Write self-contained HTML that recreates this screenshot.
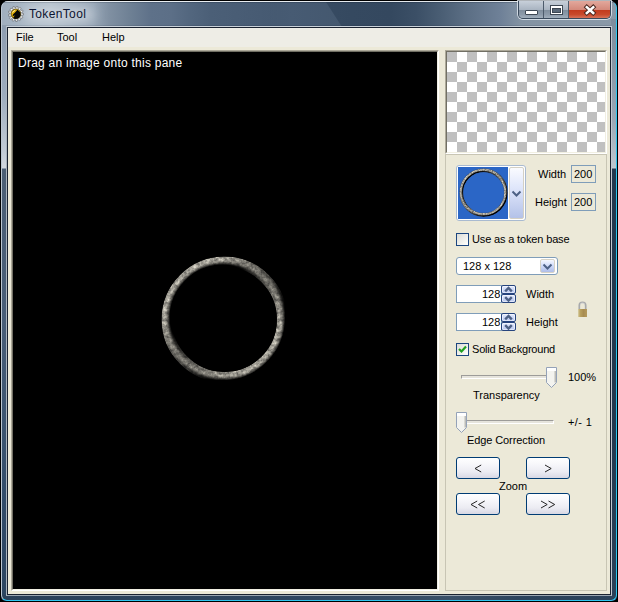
<!DOCTYPE html>
<html><head><meta charset="utf-8">
<style>
*{margin:0;padding:0;box-sizing:border-box}
html,body{width:618px;height:602px;overflow:hidden;background:#000}
body{position:relative;font-family:"Liberation Sans",sans-serif}
div,span{position:absolute}
.t{font-size:11px;line-height:15px;white-space:nowrap;color:#000}
#frame{left:0;top:0;width:618px;height:602px;border-radius:8px 8px 6px 6px;background:#000;overflow:hidden}
#glass{left:1px;top:1px;width:616px;height:600px;border-radius:7px 7px 5px 5px;overflow:hidden;background:#2d435b}
#titlebar{left:0;top:0;width:616px;height:26px;
 background:linear-gradient(90deg,#a0aebe 0px,#a8b6c4 20px,#b4c0cc 50px,#98a7b7 92px,#8090a2 108px,#6f8195 128px,#5e7189 150px,#5c6f87 170px,#52667e 190px,#4b5f77 210px,#475b73 260px,#3e5269 300px,#374b62 320px,#354960 350px,#34485f 390px,#3b4f66 415px,#4a5e74 440px,#5b6e84 465px,#6f8198 500px,#8393a3 520px,#8a99a8 616px)}
#tglow{left:24px;top:8px;width:68px;height:11px;border-radius:6px;background:rgba(214,221,228,0.9);filter:blur(6px)}
#hl-top{left:0;top:0;width:616px;height:1px;background:linear-gradient(90deg,#cfd6de,#eef2f5 30px,#dfe5ea 590px,#9fb0c0)}
#lframe{left:0;top:25px;width:6px;height:575px;background:linear-gradient(180deg,#8e9db0 0px,#9eadbd 70px,#c2cbd5 125px,#d2d8df 142px,#4c5f75 143px,#495e77 295px,#3a536f 420px,#324c69 475px,#2c4560 575px)}
#rframe{left:610px;top:18px;width:6px;height:582px;background:linear-gradient(180deg,#7d8d9d 0px,#8696a6 40px,#9aa7b5 100px,#bcc6cf 148px,#c6ced6 149px,#22384f 150px,#22384f 400px,#2b4159 582px)}
#bframe{left:0;top:594px;width:616px;height:6px;background:linear-gradient(90deg,#2a4059,#2f4660 300px,#3a5068 450px,#2c435c 520px,#2b4159)}
#hl-box{left:0;top:0;width:616px;height:600px;border:1px solid;border-color:transparent #2ec6f0 #2ec6f0 #bcc6d0;border-radius:7px 7px 6px 6px}
/* client */
#cedge{left:6px;top:26px;width:606px;height:570px;border:1px solid #d2d8de;border-color:#c9d1d9 #c0c8d0 #9aa5b0 #aab4be}
#cedge2{left:7px;top:27px;width:604px;height:568px;border:1px solid #1a2230}
#client{left:8px;top:28px;width:602px;height:566px;background:#ece9d8;overflow:hidden}
#menubar{left:0;top:0;width:602px;height:19px;background:#eeede6}
/* buttons */
#capbtns{left:518px;top:1px;width:93px;height:18px;border-radius:0 0 5px 5px;border:1px solid #3a4a5c;border-top:none;overflow:hidden;box-shadow:0 0 0 1px rgba(235,242,248,0.75)}
#bmin{left:0;top:0;width:25px;height:17px;background:linear-gradient(180deg,#c8d0da 0%,#aab5c2 50%,#7f8d9c 52%,#8d9baa 80%,#a2afbc 100%);border-right:1px solid #4d5b6b}
#bmax{left:25px;top:0;width:25px;height:17px;background:linear-gradient(180deg,#c8d0da 0%,#aab5c2 50%,#7f8d9c 52%,#8d9baa 80%,#a2afbc 100%);border-right:1px solid #4d5b6b}
#bclose{left:50px;top:0;width:42px;height:17px;background:linear-gradient(180deg,#e2a89c 0%,#d48a7c 50%,#c23a1e 54%,#c84a2c 80%,#d6725a 100%);border-right:1px solid #5a2414}

.sunk{border-style:solid;border-width:1px;border-color:#aca899 #fff #fff #aca899}
.sunk2{left:0;top:0;border-style:solid;border-width:1px;border-color:#716f64 #f1efe2 #f1efe2 #716f64}
.fld{border:1px solid #7f9db9}
.cb{width:13px;height:13px;border:1px solid #1c4680;background:linear-gradient(135deg,#dcdcd7,#f5f5f2 70%,#fff)}
.dd{border:1px solid #d6d2c6;border-radius:2px;background:linear-gradient(180deg,#f6f8fe,#d2ddfa 45%,#aebde8)}
.sp{width:15px;border:1px solid #26447e;border-radius:2px;background:linear-gradient(180deg,#e4eafc,#cdd8f7 50%,#b6c5ef);box-shadow:inset 0 0 0 1px rgba(255,255,255,0.55)}
.trk{height:4px;border-top:1px solid #9d9c99;border-left:1px solid #9d9c99;border-bottom:1px solid #fff;border-right:1px solid #fff;background:#e6e4dc}
.btn{width:44px;height:22px;border:1px solid #003c74;border-radius:3px;background:linear-gradient(180deg,#fff 0%,#f6f6fa 35%,#ebebf2 70%,#d8d8e4 100%);font-size:11px;line-height:20px;text-align:center;color:#000;letter-spacing:1px}
</style></head>
<body>
<div id="frame">
 <div id="glass">
  <div id="titlebar"></div><div style="left:240px;top:1px;width:104px;height:25px;background:linear-gradient(90deg,rgba(71,91,115,0),#475b73 50px,#44586f 100px);clip-path:polygon(0 0,85px 0,101px 100%,0 100%)"></div><div style="left:0;top:1px;width:616px;height:1px;background:rgba(0,10,30,0.18)"></div><div style="left:0;top:24px;width:616px;height:1px;background:rgba(0,10,30,0.1)"></div>
  <div id="tglow"></div>
  <div id="lframe"></div>
  <div id="rframe"></div>
  <div id="bframe"></div>
  <div id="hl-top"></div>
  <div id="hl-box"></div>
 </div>
</div>
<svg style="position:absolute;left:8px;top:6px" width="16" height="16" viewBox="0 0 16 16">
 <path d="M7.90 1.90 L8.46 0.22 L9.92 0.47 L9.89 2.24 L10.69 2.59 L11.96 1.36 L13.14 2.26 L12.29 3.81 L12.84 4.49 L14.54 4.00 L15.16 5.34 L13.69 6.32 L13.86 7.18 L15.59 7.53 L15.52 9.01 L13.76 9.19 L13.51 10.03 L14.88 11.14 L14.13 12.43 L12.49 11.77 L11.88 12.39 L12.58 14.02 L11.31 14.80 L10.16 13.46 L9.34 13.73 L9.20 15.49 L7.71 15.60 L7.32 13.87 L6.46 13.73 L5.52 15.22 L4.16 14.63 L4.61 12.92 L3.92 12.39 L2.39 13.28 L1.46 12.12 L2.66 10.82 L2.29 10.03 L0.52 10.10 L0.24 8.64 L1.90 8.04 L1.94 7.18 L0.34 6.42 L0.77 5.00 L2.52 5.24 L2.96 4.49 L1.90 3.08 L2.93 2.01 L4.37 3.05 L5.11 2.59 L4.82 0.84 L6.24 0.38 L7.03 1.96Z" fill="#f2f2f0" stroke="#5c6064" stroke-width="0.6"/>
 <circle cx="7.9" cy="7.9" r="4.9" fill="#e6b40a" stroke="#2a2204" stroke-width="0.7"/>
 <path d="M5.2 12.3 C5.4 11 6.2 10.1 7.2 9.5 C6.3 9.6 5.4 9.8 4.6 10.2 C4.6 9 5.4 7.6 6.8 6.8 L8.8 4.4 C9.3 3.9 9.9 4 10.1 4.5 C11.6 5.2 12.6 6.6 12.6 8.4 C12.6 10.6 11.2 12.4 9.1 12.8 C7.7 13.1 6.2 12.9 5.2 12.3Z" fill="#080806"/>
 <path d="M4.4 6.4 L7.2 4.1" stroke="#fff" stroke-width="0.8" opacity="0.8"/>
</svg>
<span class="t" style="left:29px;top:6px;font-size:12px;line-height:16px;color:#0c1430;letter-spacing:0.35px">TokenTool</span>
<div id="capbtns"><div id="bmin"><div style="left:6px;top:9px;width:13px;height:5px;background:#fff;border:1px solid #3e4854;border-radius:1px"></div></div><div id="bmax"><div style="left:6px;top:4px;width:13px;height:10px;border:1px solid #3e4854;background:#fff"><div style="left:1px;top:2px;width:9px;height:5px;background:#5a6878;border:1px solid #3c4652"></div></div></div><div id="bclose"><svg style="position:absolute;left:14px;top:3px" width="14" height="12"><path d="M3.8 3.2 L10.2 9 M10.2 3.2 L3.8 9" stroke="#4a2820" stroke-width="4.4" stroke-linecap="square"/><path d="M3.8 3.2 L10.2 9 M10.2 3.2 L3.8 9" stroke="#fff" stroke-width="2.5" stroke-linecap="square"/></svg></div></div>
<div id="cedge"></div>
<div id="cedge2"></div>
<div id="client">
 <div id="menubar"></div>
</div>

<!-- menu -->
<span class="t" style="left:16px;top:30px">File</span>
<span class="t" style="left:57px;top:30px">Tool</span>
<span class="t" style="left:102px;top:30px">Help</span>
<!-- black pane -->
<div class="sunk" style="left:11px;top:50px;width:428px;height:541px"><div class="sunk2" style="width:426px;height:539px;background:#000"></div></div>
<span class="t" style="left:18px;top:55px;font-size:12px;line-height:16px;color:#fff;letter-spacing:0.25px">Drag an image onto this pane</span>
<svg style="position:absolute;left:157px;top:252px" width="136" height="136" viewBox="0 0 136 136">
 <defs>
  <filter id="stone" filterUnits="userSpaceOnUse" x="0" y="0" width="136" height="136" color-interpolation-filters="sRGB">
   <feGaussianBlur in="SourceAlpha" stdDeviation="2.2" result="blur"/>
   <feDiffuseLighting in="blur" surfaceScale="5" diffuseConstant="1.15" lighting-color="#ffffff" result="light"><feDistantLight azimuth="225" elevation="40"/></feDiffuseLighting>
   <feTurbulence type="fractalNoise" baseFrequency="0.3" numOctaves="3" seed="11" result="n"/>
   <feColorMatrix in="n" type="matrix" values="1.5 0 0 0 -0.25  1.5 0 0 0 -0.25  1.45 0 0 0 -0.25  0 0 0 0 1" result="g"/>
   <feComposite in="SourceGraphic" in2="g" operator="arithmetic" k1="0.7" k2="0.62" k3="0" k4="0" result="c"/>
   <feComposite in="c" in2="light" operator="arithmetic" k1="1" k2="0" k3="0" k4="0" result="d"/>
   <feComposite in="d" in2="SourceAlpha" operator="in"/>
  </filter>
 </defs>
 <circle cx="67.5" cy="67.5" r="57.7" fill="none" stroke="#a8a59e" stroke-width="10.6" filter="url(#stone)"/>
</svg>
<!-- checker -->
<div class="sunk" style="left:445px;top:50px;width:162px;height:104px"><div class="sunk2" style="width:160px;height:102px;background-color:#fff;background-image:linear-gradient(45deg,#c0c0c0 25%,transparent 25%,transparent 75%,#c0c0c0 75%),linear-gradient(45deg,#c0c0c0 25%,transparent 25%,transparent 75%,#c0c0c0 75%);background-size:20px 20px;background-position:10px 0,0 10px"></div></div>
<div style="left:445px;top:154px;width:162px;height:437px;border:1px solid #c8c5b4"></div>
<!-- image combo -->
<div style="left:456px;top:165px;width:70px;height:56px;border:1px solid #a9bad0;border-radius:3px;background:#fff"></div>
<div style="left:458px;top:167px;width:50px;height:52px;background:#2b66c6"></div>
<svg style="position:absolute;left:458px;top:167px" width="50" height="52"><defs><filter id="stone2" filterUnits="userSpaceOnUse" x="0" y="0" width="50" height="52" color-interpolation-filters="sRGB"><feGaussianBlur in="SourceAlpha" stdDeviation="0.9" result="blur"/><feDiffuseLighting in="blur" surfaceScale="2" diffuseConstant="1.4" lighting-color="#ffffff" result="light"><feDistantLight azimuth="225" elevation="40"/></feDiffuseLighting><feTurbulence type="fractalNoise" baseFrequency="0.7" numOctaves="2" seed="4" result="n"/><feColorMatrix in="n" type="matrix" values="1.5 0 0 0 -0.25  1.5 0 0 0 -0.25  1.45 0 0 0 -0.25  0 0 0 0 1" result="g"/><feComposite in="SourceGraphic" in2="g" operator="arithmetic" k1="0.7" k2="0.62" k3="0" k4="0" result="c"/><feComposite in="c" in2="light" operator="arithmetic" k1="1" k2="0" k3="0" k4="0" result="d"/><feComposite in="d" in2="SourceAlpha" operator="in"/></filter></defs><circle cx="25.6" cy="25.6" r="22.3" fill="none" stroke="#3c3c3c" stroke-width="4.2" opacity="0.3"/><circle cx="25.6" cy="25.6" r="22.3" fill="none" stroke="#aeaba4" stroke-width="3.6" filter="url(#stone2)"/></svg>
<div style="left:509px;top:167px;width:15px;height:52px;background:linear-gradient(180deg,#fafbff,#dfe6fb 40%,#b4c2e8);border:1px solid #d4d0c4;border-radius:2px"></div>
<svg style="position:absolute;left:511px;top:189px" width="11" height="9"><path d="M1.5 2.5 L5.5 6.5 L9.5 2.5" fill="none" stroke="#4d6185" stroke-width="2"/></svg>
<span class="t" style="left:538px;top:167px">Width</span>
<div class="fld" style="left:571px;top:165px;width:25px;height:18px"></div>
<span class="t" style="left:574px;top:167px">200</span>
<span class="t" style="left:535px;top:195px">Height</span>
<div class="fld" style="left:571px;top:193px;width:25px;height:18px"></div>
<span class="t" style="left:574px;top:195px">200</span>
<!-- checkbox 1 -->
<div class="cb" style="left:456px;top:233px"></div>
<span class="t" style="left:472px;top:232px;letter-spacing:-0.15px">Use as a token base</span>
<!-- size combo -->
<div style="left:456px;top:257px;width:102px;height:18px;border:1px solid #7f9db9;border-radius:3px;background:#fff"></div>
<span class="t" style="left:463px;top:259px">128 x 128</span>
<div class="dd" style="left:540px;top:259px;width:15px;height:14px"></div>
<svg style="position:absolute;left:542px;top:262px" width="11" height="9"><path d="M1.5 2.5 L5.5 6.5 L9.5 2.5" fill="none" stroke="#4d6185" stroke-width="2"/></svg>
<!-- spinners -->
<div style="left:456px;top:285px;width:46px;height:18px;border:1px solid #7f9db9;background:#fff"></div>
<span class="t" style="left:482px;top:287px">128</span>
<div class="sp" style="left:501px;top:285px;height:9px"></div><div class="sp" style="left:501px;top:294px;height:9px"></div>
<svg style="position:absolute;left:501px;top:285px" width="15" height="18"><path d="M4.2 6.3 L7.5 3 L10.8 6.3" fill="none" stroke="#4d6185" stroke-width="2.4"/><path d="M4.2 12.2 L7.5 15.5 L10.8 12.2" fill="none" stroke="#4d6185" stroke-width="2.4"/></svg>
<span class="t" style="left:526px;top:287px">Width</span>
<div style="left:456px;top:313px;width:46px;height:18px;border:1px solid #7f9db9;background:#fff"></div>
<span class="t" style="left:482px;top:315px">128</span>
<div class="sp" style="left:501px;top:313px;height:9px"></div><div class="sp" style="left:501px;top:322px;height:9px"></div>
<svg style="position:absolute;left:501px;top:313px" width="15" height="18"><path d="M4.2 6.3 L7.5 3 L10.8 6.3" fill="none" stroke="#4d6185" stroke-width="2.4"/><path d="M4.2 12.2 L7.5 15.5 L10.8 12.2" fill="none" stroke="#4d6185" stroke-width="2.4"/></svg>
<span class="t" style="left:526px;top:315px">Height</span>
<!-- lock -->
<svg style="position:absolute;left:577px;top:301px" width="12" height="17"><defs><linearGradient id="lk" x1="0" x2="1"><stop offset="0" stop-color="#cfc28e"/><stop offset="0.25" stop-color="#b8a05e"/><stop offset="0.6" stop-color="#a88c50"/><stop offset="1" stop-color="#b59a5c"/></linearGradient></defs><path d="M2.3 8.5 V4.6 A3.2 3.2 0 0 1 8.7 4.6 V8.5" fill="none" stroke="#a8aaac" stroke-width="1.7"/><path d="M3.2 3.2 A3 3 0 0 1 7.8 3.2" fill="none" stroke="#e8e8e8" stroke-width="0.7"/><rect x="1.2" y="8" width="8.8" height="8" fill="url(#lk)"/></svg>
<!-- checkbox 2 -->
<div class="cb" style="left:456px;top:343px"></div>
<svg style="position:absolute;left:456px;top:343px" width="13" height="13"><path d="M3 6 L5.5 8.5 L10 3.5" fill="none" stroke="#21a121" stroke-width="2.2"/></svg>
<span class="t" style="left:472px;top:342px;letter-spacing:-0.2px">Solid Background</span>
<!-- slider 1 -->
<div class="trk" style="left:461px;top:375px;width:92px"></div>
<svg style="position:absolute;left:545px;top:366px" width="13" height="23"><path d="M1.5 1.5 H11.5 V16.5 L6.5 21.5 L1.5 16.5 Z" fill="#f3f3ef" stroke="#94a2b8" stroke-width="1"/><rect x="2" y="2" width="9" height="3" fill="#fff"/><rect x="9.5" y="5" width="1.5" height="11.5" fill="#bdbdb8"/></svg>
<span class="t" style="left:568px;top:370px">100%</span>
<span class="t" style="left:473px;top:388px">Transparency</span>
<!-- slider 2 -->
<div class="trk" style="left:461px;top:420px;width:93px"></div>
<svg style="position:absolute;left:455px;top:411px" width="13" height="23"><path d="M1.5 1.5 H11.5 V16.5 L6.5 21.5 L1.5 16.5 Z" fill="#f3f3ef" stroke="#94a2b8" stroke-width="1"/><rect x="2" y="2" width="9" height="3" fill="#fff"/><rect x="9.5" y="5" width="1.5" height="11.5" fill="#bdbdb8"/></svg>
<span class="t" style="left:568px;top:415px;letter-spacing:0.4px">+/- 1</span>
<span class="t" style="left:467px;top:433px;letter-spacing:-0.1px">Edge Correction</span>
<!-- buttons -->
<div class="btn" style="left:456px;top:457px"></div>
<div class="btn" style="left:526px;top:457px"></div>
<span class="t" style="left:499px;top:479px">Zoom</span>
<div class="btn" style="left:456px;top:493px"></div>
<div class="btn" style="left:526px;top:493px"></div>
<svg style="position:absolute;left:474px;top:464px" width="9" height="9"><path d="M7.2 1 L1 4.5 L7.2 8" fill="none" stroke="#1a1a1a" stroke-width="0.95"/></svg>
<svg style="position:absolute;left:544px;top:464px" width="9" height="9"><path d="M1 1 L7.2 4.5 L1 8" fill="none" stroke="#1a1a1a" stroke-width="0.95"/></svg>
<svg style="position:absolute;left:470px;top:500px" width="17" height="9"><path d="M7.2 1 L1 4.5 L7.2 8 M14.7 1 L8.5 4.5 L14.7 8" fill="none" stroke="#1a1a1a" stroke-width="0.95"/></svg>
<svg style="position:absolute;left:540px;top:500px" width="17" height="9"><path d="M1 1 L7.2 4.5 L1 8 M8.5 1 L14.7 4.5 L8.5 8" fill="none" stroke="#1a1a1a" stroke-width="0.95"/></svg>
</body></html>
